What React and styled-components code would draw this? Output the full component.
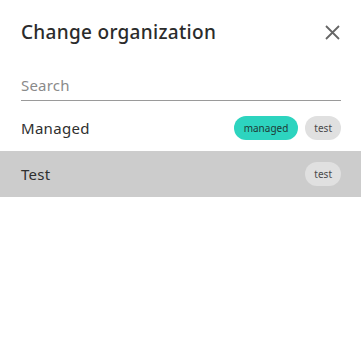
import React from "react";
import styled, { createGlobalStyle } from "styled-components";

const Global = createGlobalStyle`
  html, body { margin: 0; padding: 0; background: #fff; }
  body { font-family: "Noto Sans", Lato, sans-serif; color: #333; }
`;

const Dialog = styled.div`
  width: 361px;
  height: 342px;
  background: #fff;
  display: flex;
  flex-direction: column;
`;

const Header = styled.div`
  display: flex;
  align-items: center;
  justify-content: space-between;
  padding: 19px 20px 0 21px;
  height: 26px;
`;

const Title = styled.h2`
  margin: 0;
  font-size: 19px;
  line-height: 26px;
  font-weight: 500;
  letter-spacing: 0.3px;
  color: #2b2b2b;
`;

const CloseButton = styled.button`
  border: 0;
  background: none;
  padding: 0;
  width: 18px;
  height: 18px;
  display: flex;
  align-items: center;
  justify-content: center;
  cursor: pointer;
`;

const SearchWrap = styled.div`
  padding: 30px 20px 0 21px;
`;

const SearchInput = styled.input`
  display: block;
  width: 100%;
  box-sizing: border-box;
  border: 0;
  border-bottom: 1px solid #9a9a9a;
  outline: none;
  font-family: inherit;
  font-size: 15px;
  line-height: 20px;
  letter-spacing: 0.2px;
  color: #333;
  padding: 0 0 5px 0;
  height: 26px;
  &::placeholder { color: #8a8a8a; }
`;

const List = styled.div`
  margin-top: 4px;
  display: flex;
  flex-direction: column;
`;

const Row = styled.div`
  height: 46px;
  display: flex;
  align-items: center;
  justify-content: space-between;
  padding: 0 20px 0 21px;
  background: ${(p) => (p.$selected ? "#cccccc" : "transparent")};
`;

const Name = styled.span`
  font-size: 15px;
  line-height: 20px;
  letter-spacing: 0.3px;
  color: #2f2f2f;
`;

const Chips = styled.div`
  display: flex;
  gap: 7px;
`;

const Chip = styled.span`
  height: 24px;
  padding: 0 ${(p) => (p.$variant === "managed" ? "10px" : "9px")};
  border-radius: 12px;
  display: inline-flex;
  align-items: center;
  font-size: 10px;
  color: ${(p) => (p.$variant === "managed" ? "#1e3a36" : "#4a4a4a")};
  background: ${(p) => (p.$variant === "managed" ? "#2dd4bf" : "#e0e0e0")};
`;

export default function App() {
  return (
    <>
      <Global />
      <Dialog>
        <Header>
          <Title>Change organization</Title>
          <CloseButton aria-label="Close">
            <svg width="15" height="15" viewBox="0 0 15 15">
              <path d="M1 1 L14 14 M14 1 L1 14" stroke="#666" strokeWidth="1.8" />
            </svg>
          </CloseButton>
        </Header>
        <SearchWrap>
          <SearchInput placeholder="Search" />
        </SearchWrap>
        <List>
          <Row>
            <Name>Managed</Name>
            <Chips>
              <Chip $variant="managed">managed</Chip>
              <Chip>test</Chip>
            </Chips>
          </Row>
          <Row $selected>
            <Name>Test</Name>
            <Chips>
              <Chip>test</Chip>
            </Chips>
          </Row>
        </List>
      </Dialog>
    </>
  );
}
